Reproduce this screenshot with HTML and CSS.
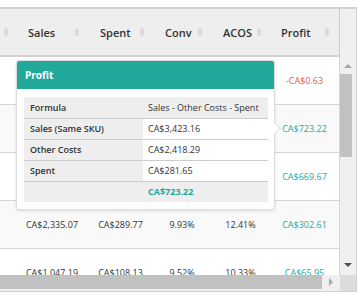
FILE: index.html
```html
<!DOCTYPE html>
<html>
<head>
<meta charset="utf-8">
<link rel="stylesheet" href="styles.css">
</head>
<body>
<div class="page">
  <div class="top">
    <div class="head">
      <div class="hcell hcell-first"><svg class="sort" viewBox="0 0 6 10"><path d="M1 4 L3 1.5 L5 4 Z M1 6 L3 8.5 L5 6 Z"/></svg></div>
      <div class="hcell"><span>Sales</span><svg class="sort" viewBox="0 0 6 10"><path d="M1 4 L3 1.5 L5 4 Z M1 6 L3 8.5 L5 6 Z"/></svg></div>
      <div class="hcell"><span>Spent</span><svg class="sort" viewBox="0 0 6 10"><path d="M1 4 L3 1.5 L5 4 Z M1 6 L3 8.5 L5 6 Z"/></svg></div>
      <div class="hcell"><span>Conv</span><svg class="sort" viewBox="0 0 6 10"><path d="M1 4 L3 1.5 L5 4 Z M1 6 L3 8.5 L5 6 Z"/></svg></div>
      <div class="hcell"><span>ACOS</span><svg class="sort" viewBox="0 0 6 10"><path d="M1 4 L3 1.5 L5 4 Z M1 6 L3 8.5 L5 6 Z"/></svg></div>
      <div class="hcell hcell-last"><span>Profit</span><svg class="sort" viewBox="0 0 6 10"><path d="M1 4 L3 1.5 L5 4 Z M1 6 L3 8.5 L5 6 Z"/></svg></div>
    </div>
    <div class="head-gap"></div>
  </div>
  <div class="mid">
    <div class="rows">
      <div class="row">
        <div class="cell"></div><div class="cell"></div><div class="cell"></div><div class="cell"></div><div class="cell"></div><div class="cell neg">-CA$0.63</div>
      </div>
      <div class="row alt">
        <div class="cell"></div><div class="cell"></div><div class="cell"></div><div class="cell"></div><div class="cell"></div><div class="cell pos">CA$723.22</div>
      </div>
      <div class="row">
        <div class="cell"></div><div class="cell"></div><div class="cell"></div><div class="cell"></div><div class="cell"></div><div class="cell pos">CA$669.67</div>
      </div>
      <div class="row alt">
        <div class="cell"></div><div class="cell">CA$2,335.07</div><div class="cell">CA$289.77</div><div class="cell">9.93%</div><div class="cell">12.41%</div><div class="cell pos">CA$302.61</div>
      </div>
      <div class="row">
        <div class="cell"></div><div class="cell">CA$1,047.19</div><div class="cell">CA$108.13</div><div class="cell">9.52%</div><div class="cell">10.33%</div><div class="cell pos">CA$65.95</div>
      </div>
    </div>
    <div class="vscroll">
      <div class="arrow-up"></div>
      <div class="vthumb"></div>
      <div class="vspace"></div>
      <div class="arrow-down"></div>
    </div>
  </div>
  <div class="bottom">
    <div class="hscroll">
      <div class="hthumb"></div>
      <div class="arrow-right"></div>
    </div>
    <div class="corner"></div>
  </div>

  <div class="tip">
    <div class="tip-title">Profit</div>
    <div class="tip-body">
      <table class="tip-table">
        <tr><th>Formula</th><td class="shade">Sales - Other Costs - Spent</td></tr>
        <tr><th>Sales (Same SKU)</th><td>CA$3,423.16</td></tr>
        <tr><th>Other Costs</th><td>CA$2,418.29</td></tr>
        <tr><th>Spent</th><td>CA$281.65</td></tr>
        <tr class="total"><th></th><td class="shade">CA$723.22</td></tr>
      </table>
    </div>
    <span class="tip-arrow"></span>
  </div>
</div>
</body>
</html>
```
FILE: styles.css
```css
html, body {
  margin: 0;
  padding: 0;
  background: #ffffff;
}

body {
  font-family: "Open Sans", "Noto Sans", sans-serif;
  color: #333333;
}

.page {
  position: relative;
  margin-top: 7px;
  width: 356px;
  border-top: 2px solid #d2d2d2;
  border-right: 1px solid #d2d2d2;
}

.top {
  display: flex;
}

.head {
  width: 340px;
  height: 48px;
  box-sizing: border-box;
  display: grid;
  grid-template-columns: 16px 72px 65px 58px 59px 69px;
  background: #eeeeee;
  border-bottom: 2px solid #d2d2d2;
  border-right: 1px solid #cccccc;
}

.hcell {
  display: flex;
  align-items: center;
  justify-content: space-between;
  padding: 0 8px 0 12px;
  font-size: 11px;
  font-weight: 600;
  color: #333333;
}

.hcell-first {
  justify-content: flex-end;
  padding: 0 7px 0 0;
}

.hcell-last {
  padding: 0 9px 0 11px;
}

.sort {
  width: 6px;
  height: 10px;
  fill: none;
  stroke: #c4c4c4;
  stroke-width: 0.8;
}

.head-gap {
  width: 16px;
  background: #f0f0f0;
}

.mid {
  display: flex;
  height: 218px;
}

.rows {
  width: 340px;
  overflow: hidden;
  border-right: 1px solid #d6d6d6;
  box-sizing: border-box;
}

.row {
  display: grid;
  grid-template-columns: 16px 72px 65px 58px 59px 69px;
  height: 47px;
  border-bottom: 1px solid #d6d6d6;
  background: #ffffff;
}

.row.alt {
  background: #f9f9f9;
}

.cell {
  display: flex;
  align-items: center;
  justify-content: center;
  font-size: 9px;
  color: #333333;
  white-space: nowrap;
}

.cell.neg {
  color: #e0603c;
}

.cell.pos {
  color: #1ea99b;
}

.vscroll {
  width: 16px;
  background: #f0f0f0;
  display: flex;
  flex-direction: column;
  align-items: center;
}

.arrow-up {
  margin-top: 7px;
  width: 0;
  height: 0;
  border-left: 4px solid transparent;
  border-right: 4px solid transparent;
  border-bottom: 4px solid #a8a8a8;
}

.vthumb {
  margin-top: 6px;
  width: 12px;
  height: 83px;
  background: #c1c1c1;
  align-self: flex-start;
}

.vspace {
  flex: 1;
}

.arrow-down {
  margin-bottom: 8px;
  width: 0;
  height: 0;
  border-left: 4px solid transparent;
  border-right: 4px solid transparent;
  border-top: 4px solid #505050;
}

.bottom {
  display: flex;
  height: 16px;
  border-bottom: 1px solid #d0d0d0;
}

.hscroll {
  width: 340px;
  background: #f0f0f0;
  display: flex;
  align-items: flex-start;
}

.hthumb {
  width: 322px;
  height: 14px;
  background: #c1c1c1;
}

.arrow-right {
  margin: 3px 0 0 7px;
  width: 0;
  height: 0;
  border-top: 4px solid transparent;
  border-bottom: 4px solid transparent;
  border-left: 4px solid #a8a8a8;
}

.corner {
  flex: 1;
  background: #dcdcdc;
}

.tip {
  position: absolute;
  left: 16px;
  top: 51px;
  width: 257px;
  background: #ffffff;
  border: 1px solid #dddddd;
  border-radius: 3px;
  box-shadow: 0 1px 3px rgba(0, 0, 0, 0.12);
}

.tip-title {
  height: 28px;
  display: flex;
  align-items: center;
  padding-left: 8px;
  background: #22a99b;
  color: #ffffff;
  font-size: 10px;
  font-weight: 700;
  border-radius: 2px 2px 0 0;
}

.tip-body {
  padding: 8px 6px 7px 7px;
}

.tip-table {
  width: 244px;
  border-collapse: collapse;
  background: #eeeeee;
  font-size: 9px;
}

.tip-table tr {
  height: 21px;
  border-bottom: 1px solid #cccccc;
}

.tip-table tr.total {
  border-bottom: none;
}

.tip-table th {
  width: 113px;
  text-align: left;
  font-weight: 600;
  padding: 0 0 0 6px;
  color: #333333;
  white-space: nowrap;
}

.tip-table td {
  background: #ffffff;
  padding: 0 0 0 5px;
  color: #333333;
  white-space: nowrap;
}

.tip-table td.shade {
  background: #eeeeee;
}

.tip-table tr.total td {
  color: #1ea99b;
  font-weight: 700;
}

.tip-arrow {
  position: absolute;
  right: -5px;
  top: 63px;
  width: 8px;
  height: 8px;
  background: #ffffff;
  border-top: 1px solid #dddddd;
  border-right: 1px solid #dddddd;
  transform: rotate(45deg);
}
```
